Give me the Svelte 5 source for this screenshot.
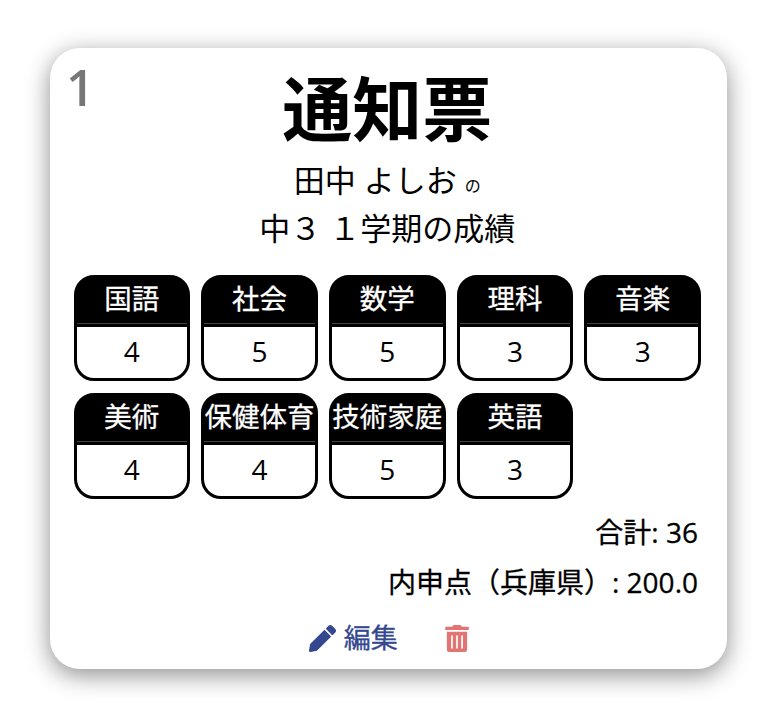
<script lang="ts">
  const grades = [
    { name: '国語', value: 4 },
    { name: '社会', value: 5 },
    { name: '数学', value: 5 },
    { name: '理科', value: 3 },
    { name: '音楽', value: 3 },
    { name: '美術', value: 4 },
    { name: '保健体育', value: 4 },
    { name: '技術家庭', value: 5 },
    { name: '英語', value: 3 }
  ];
</script>

<div class="page">
  <div class="card">
    <span class="index">1</span>
    <h1>通知票</h1>
    <p class="student">田中 よしお <small>の</small></p>
    <p class="term">中３ １学期の成績</p>

    <div class="grades">
      {#each grades as grade}
        <div class="grade">
          <div class="subject">{grade.name}</div>
          <div class="value">{grade.value}</div>
        </div>
      {/each}
    </div>

    <p class="total">合計: 36</p>
    <p class="total naishin">内申点（兵庫県）: 200.0</p>

    <div class="actions">
      <button class="edit">
        <svg viewBox="0 0 512 512" width="27" height="27"><path fill="currentColor" d="M497.9 142.1l-46.1 46.1c-4.7 4.7-12.3 4.7-17 0l-111-111c-4.7-4.7-4.7-12.3 0-17l46.1-46.1c18.7-18.7 49.1-18.7 67.9 0l60.1 60.1c18.8 18.7 18.8 49.1 0 67.9zM284.2 99.8L21.6 362.4.4 483.9c-2.9 16.4 11.4 30.6 27.8 27.8l121.5-21.3 262.6-262.6c4.7-4.7 4.7-12.3 0-17l-111-111c-4.8-4.7-12.4-4.7-17.1 0z"/></svg>
        編集
      </button>
      <button class="remove" aria-label="削除">
        <svg viewBox="0 0 448 512" width="24" height="27"><path fill="currentColor" d="M32 464a48 48 0 0 0 48 48h288a48 48 0 0 0 48-48V128H32zm272-256a16 16 0 0 1 32 0v224a16 16 0 0 1-32 0zm-96 0a16 16 0 0 1 32 0v224a16 16 0 0 1-32 0zm-96 0a16 16 0 0 1 32 0v224a16 16 0 0 1-32 0zM432 32H312l-9.4-18.7A24 24 0 0 0 281.1 0H166.8a23.72 23.72 0 0 0-21.4 13.3L136 32H16A16 16 0 0 0 0 48v32a16 16 0 0 0 16 16h416a16 16 0 0 0 16-16V48a16 16 0 0 0-16-16z"/></svg>
      </button>
    </div>
  </div>
</div>

<style>
  :global(body) {
    background: #fff;
    font-family: "Open Sans", "Noto Sans CJK JP", sans-serif;
    color: #000;
  }

  .page {
    padding: 48px 57px 55px 50px;
  }

  .card {
    position: relative;
    box-sizing: border-box;
    height: 621px;
    padding: 0 26px 0 23.5px;
    background: #fff;
    border-radius: 30px;
    box-shadow: 0 6px 24px rgba(0, 0, 0, 0.45);
    text-align: center;
  }

  .index {
    position: absolute;
    top: 9px;
    left: 16px;
    font-size: 50px;
    font-weight: 550;
    line-height: 60px;
    color: #777;
  }

  h1 {
    margin: 0;
    padding-top: 16px;
    font-size: 70px;
    line-height: 90px;
    font-weight: 700;
  }

  p {
    margin: 0;
  }

  .student {
    margin-top: 3px;
    font-size: 31px;
    line-height: 46px;
  }

  .student small {
    font-size: 16px;
  }

  .term {
    margin-top: -4px;
    font-size: 31px;
    line-height: 46px;
  }

  .grades {
    display: grid;
    grid-template-columns: repeat(5, 1fr);
    gap: 12px 11px;
    margin-top: 24px;
  }

  .grade {
    box-sizing: border-box;
    height: 106px;
    border: 3px solid #000;
    border-radius: 20px;
    background: #000;
    overflow: hidden;
  }

  .subject {
    height: 45px;
    border-bottom: 1px solid #444;
    color: #fff;
    font-size: 27.5px;
    line-height: 42px;
    white-space: nowrap;
    -webkit-text-stroke: 0.3px #fff;
  }

  .value {
    height: 100%;
    border-top: 3px solid #000;
    background: #fff;
    font-size: 28px;
    line-height: 49px;
  }

  .total {
    margin-top: 13px;
    padding-right: 3px;
    text-align: right;
    font-size: 28px;
    line-height: 40px;
    -webkit-text-stroke: 0.3px #000;
  }

  .naishin {
    margin-top: 10px;
  }

  .actions {
    display: flex;
    justify-content: center;
    align-items: center;
    gap: 47px;
    margin: 16px 0 0 3px;
  }

  button {
    display: flex;
    align-items: center;
    gap: 8px;
    padding: 0;
    border: none;
    background: none;
    font: inherit;
    font-size: 27px;
    line-height: 40px;
  }

  .edit {
    color: #34478f;
    -webkit-text-stroke: 0.3px #34478f;
  }

  .remove {
    color: #e27573;
  }
</style>
